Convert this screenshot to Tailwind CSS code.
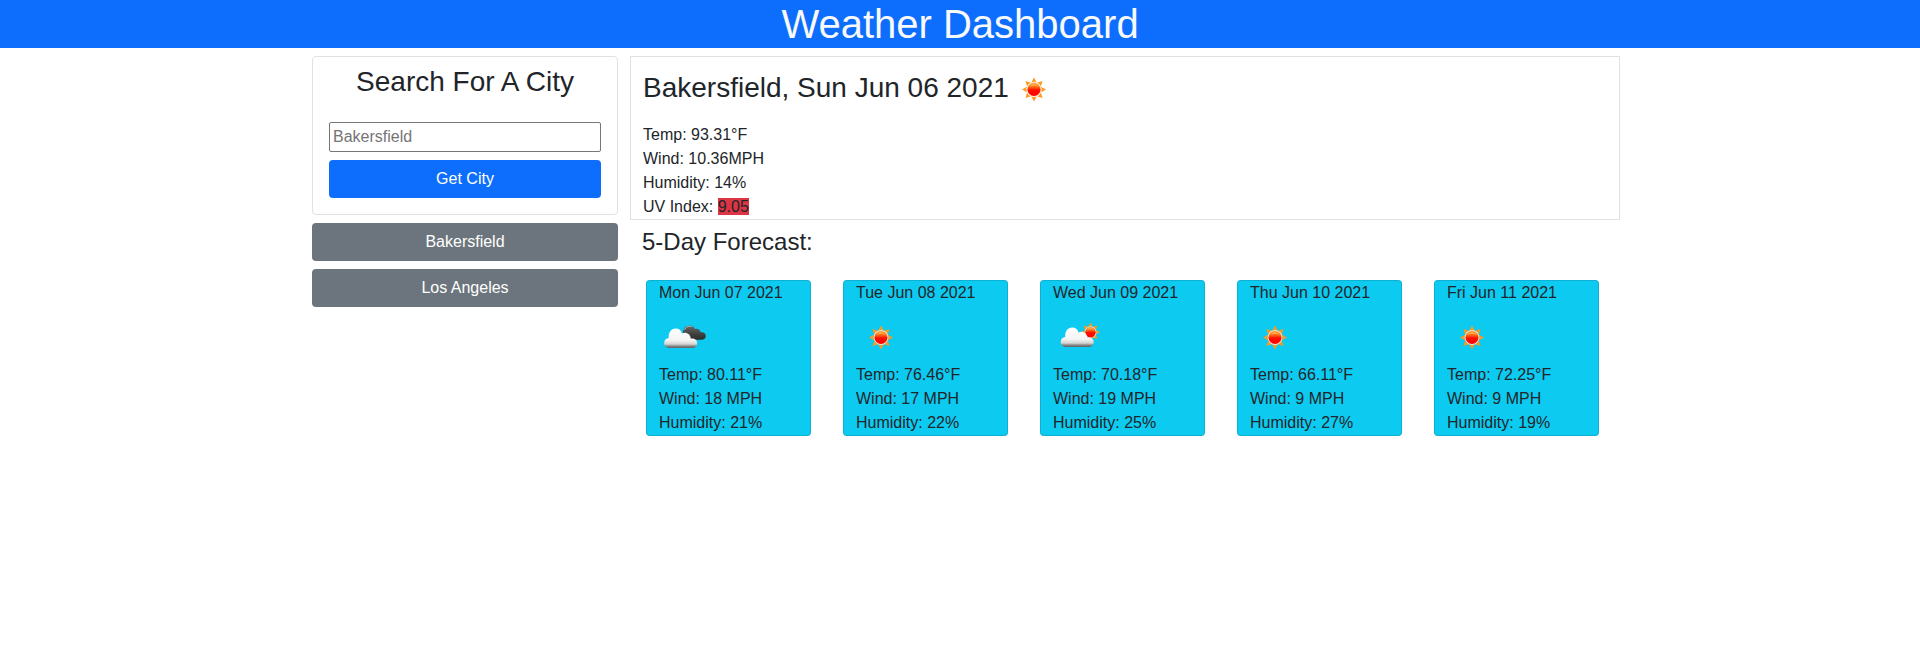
<!DOCTYPE html>
<html lang="en">
<head>
<meta charset="utf-8">
<meta name="viewport" content="width=device-width, initial-scale=1">
<title>Weather Dashboard</title>
<script src="https://cdn.jsdelivr.net/npm/@tailwindcss/browser@4"></script>
</head>
<body class="bg-white font-['Liberation_Sans',Arial,sans-serif] text-base text-[#212529]">
<svg class="absolute size-0" aria-hidden="true">
  <defs>
    <linearGradient id="disc" x1="0" y1="0" x2="0" y2="1">
      <stop offset="0" stop-color="#ff9a2e"/><stop offset=".35" stop-color="#ff5a10"/><stop offset=".55" stop-color="#ff0d00"/><stop offset="1" stop-color="#ff0000"/>
    </linearGradient>
    <linearGradient id="white" x1="0" y1="0" x2="0" y2="1">
      <stop offset="0" stop-color="#ffffff"/><stop offset=".6" stop-color="#f4f4f4"/><stop offset=".8" stop-color="#d4d4d4"/><stop offset=".9" stop-color="#8a8a8a"/><stop offset="1" stop-color="#606060"/>
    </linearGradient>
    <linearGradient id="dark" x1="0" y1="0" x2="0" y2="1">
      <stop offset="0" stop-color="#6a6a6a"/><stop offset=".5" stop-color="#454545"/><stop offset="1" stop-color="#2c2c2c"/>
    </linearGradient>
    <path id="ray" d="M-2.7-7Q0-8.400 2.700-7L0-12Z" fill="#fb9a1c"/>
    <g id="sunshape">
      <use href="#ray"/><use href="#ray" transform="rotate(45)"/><use href="#ray" transform="rotate(90)"/><use href="#ray" transform="rotate(135)"/>
      <use href="#ray" transform="rotate(180)"/><use href="#ray" transform="rotate(225)"/><use href="#ray" transform="rotate(270)"/><use href="#ray" transform="rotate(315)"/>
      <circle r="7.4" fill="#ffe3c4"/>
      <circle r="6.5" fill="url(#disc)"/>
      <path d="M-5-2.600Q0-8.400 5-2.600Q0-4.600-5-2.600Z" fill="#ffc45c" opacity=".65"/>
    </g>
    <path id="cloudshape" d="M5.400 19.400C1.800 19.400 0 17 0 14.400C0 11.600 1.900 9.800 4.500 9.400C4 4.200 7 0 11.400 0C14.800 0 17 2 17.800 4.800C22 3 26.400 5.600 26.500 9.900C30.400 9.400 33 11.400 33 14.400C33 17.400 30.800 19.400 27.800 19.400Z"/>
    <symbol id="clear" viewBox="0 0 50 50"><use href="#sunshape" x="25" y="24.5"/></symbol>
    <symbol id="broken" viewBox="0 0 50 50">
      <path d="M24 20C24 15.600 27 12.500 30.500 12.500C33.200 12.500 35 14 35.700 16C38.500 15 41.300 16.800 41.800 19.400C44.800 19 46.800 20.600 46.800 23C46.800 25.400 45 26.800 42.800 26.800H30Z" fill="url(#dark)"/>
      <path d="M25.500 16.800C27 13.600 30 12.800 32.600 13.800" fill="none" stroke="#b5c3c8" stroke-width="1"/>
      <use href="#cloudshape" x="5.200" y="15.600" fill="url(#white)"/>
    </symbol>
    <symbol id="few" viewBox="0 0 50 50">
      <g transform="translate(37.500 19.200) scale(.8)"><use href="#sunshape"/></g>
      <g transform="translate(7.700 14.600)"><use href="#cloudshape" fill="url(#white)"/></g>
    </symbol>
  </defs>
</svg>

<header class="bg-[#0d6efd] text-center text-[40px] leading-[48px] text-[#f8f9fa]"><h1>Weather Dashboard</h1></header>

<main class="mx-auto flex max-w-[1320px] items-start pt-2">
  <aside class="flex w-1/4 shrink-0 flex-col gap-2 px-3">
    <form class="flex flex-col rounded border border-[#dee2e6] px-4 pt-2 pb-4" onsubmit="return false">
      <label for="city" class="mb-[23px] text-center text-[28px] leading-[34px]">Search For A City</label>
      <input id="city" type="text" placeholder="Bakersfield" class="mb-2 h-[30px] w-full rounded-xs border border-[#767676] bg-white px-[3px] placeholder:text-[#757575]">
      <button type="submit" class="h-[38px] rounded bg-[#0d6efd] text-white">Get City</button>
    </form>
    <button type="button" class="h-[38px] rounded bg-[#6c757d] text-white">Bakersfield</button>
    <button type="button" class="h-[38px] rounded bg-[#6c757d] text-white">Los Angeles</button>
  </aside>

  <div class="min-w-0 flex-1">
    <section class="border border-[#dee2e6] px-3 pt-2 leading-6">
      <h2 class="mb-2 flex items-center text-[28px] leading-[34px]"><span class="pb-1">Bakersfield, Sun Jun 06 2021</span><svg class="size-[50px]" role="img" aria-label="Clear sky"><use href="#clear"/></svg></h2>
      <p>Temp: 93.31°F</p>
      <p>Wind: 10.36MPH</p>
      <p>Humidity: 14%</p>
      <p>UV Index: <span class="bg-[#dc3545]">9.05</span></p>
    </section>

    <section>
      <h2 class="mt-2 mb-6 px-3 text-2xl leading-7">5-Day Forecast:</h2>
      <div class="grid grid-cols-5 gap-8 pr-[21px] pl-4 leading-6">
        <article class="rounded border border-black/[.125] bg-[#0dcaf0] px-3">
          <h3>Mon Jun 07 2021</h3>
          <svg class="mt-2 size-[50px]" role="img" aria-label="Broken clouds"><use href="#broken"/></svg>
          <p>Temp: 80.11°F</p><p>Wind: 18 MPH</p><p>Humidity: 21%</p>
        </article>
        <article class="rounded border border-black/[.125] bg-[#0dcaf0] px-3">
          <h3>Tue Jun 08 2021</h3>
          <svg class="mt-2 size-[50px]" role="img" aria-label="Clear sky"><use href="#clear"/></svg>
          <p>Temp: 76.46°F</p><p>Wind: 17 MPH</p><p>Humidity: 22%</p>
        </article>
        <article class="rounded border border-black/[.125] bg-[#0dcaf0] px-3">
          <h3>Wed Jun 09 2021</h3>
          <svg class="mt-2 size-[50px]" role="img" aria-label="Few clouds"><use href="#few"/></svg>
          <p>Temp: 70.18°F</p><p>Wind: 19 MPH</p><p>Humidity: 25%</p>
        </article>
        <article class="rounded border border-black/[.125] bg-[#0dcaf0] px-3">
          <h3>Thu Jun 10 2021</h3>
          <svg class="mt-2 size-[50px]" role="img" aria-label="Clear sky"><use href="#clear"/></svg>
          <p>Temp: 66.11°F</p><p>Wind: 9 MPH</p><p>Humidity: 27%</p>
        </article>
        <article class="rounded border border-black/[.125] bg-[#0dcaf0] px-3">
          <h3>Fri Jun 11 2021</h3>
          <svg class="mt-2 size-[50px]" role="img" aria-label="Clear sky"><use href="#clear"/></svg>
          <p>Temp: 72.25°F</p><p>Wind: 9 MPH</p><p>Humidity: 19%</p>
        </article>
      </div>
    </section>
  </div>
</main>
</body>
</html>
